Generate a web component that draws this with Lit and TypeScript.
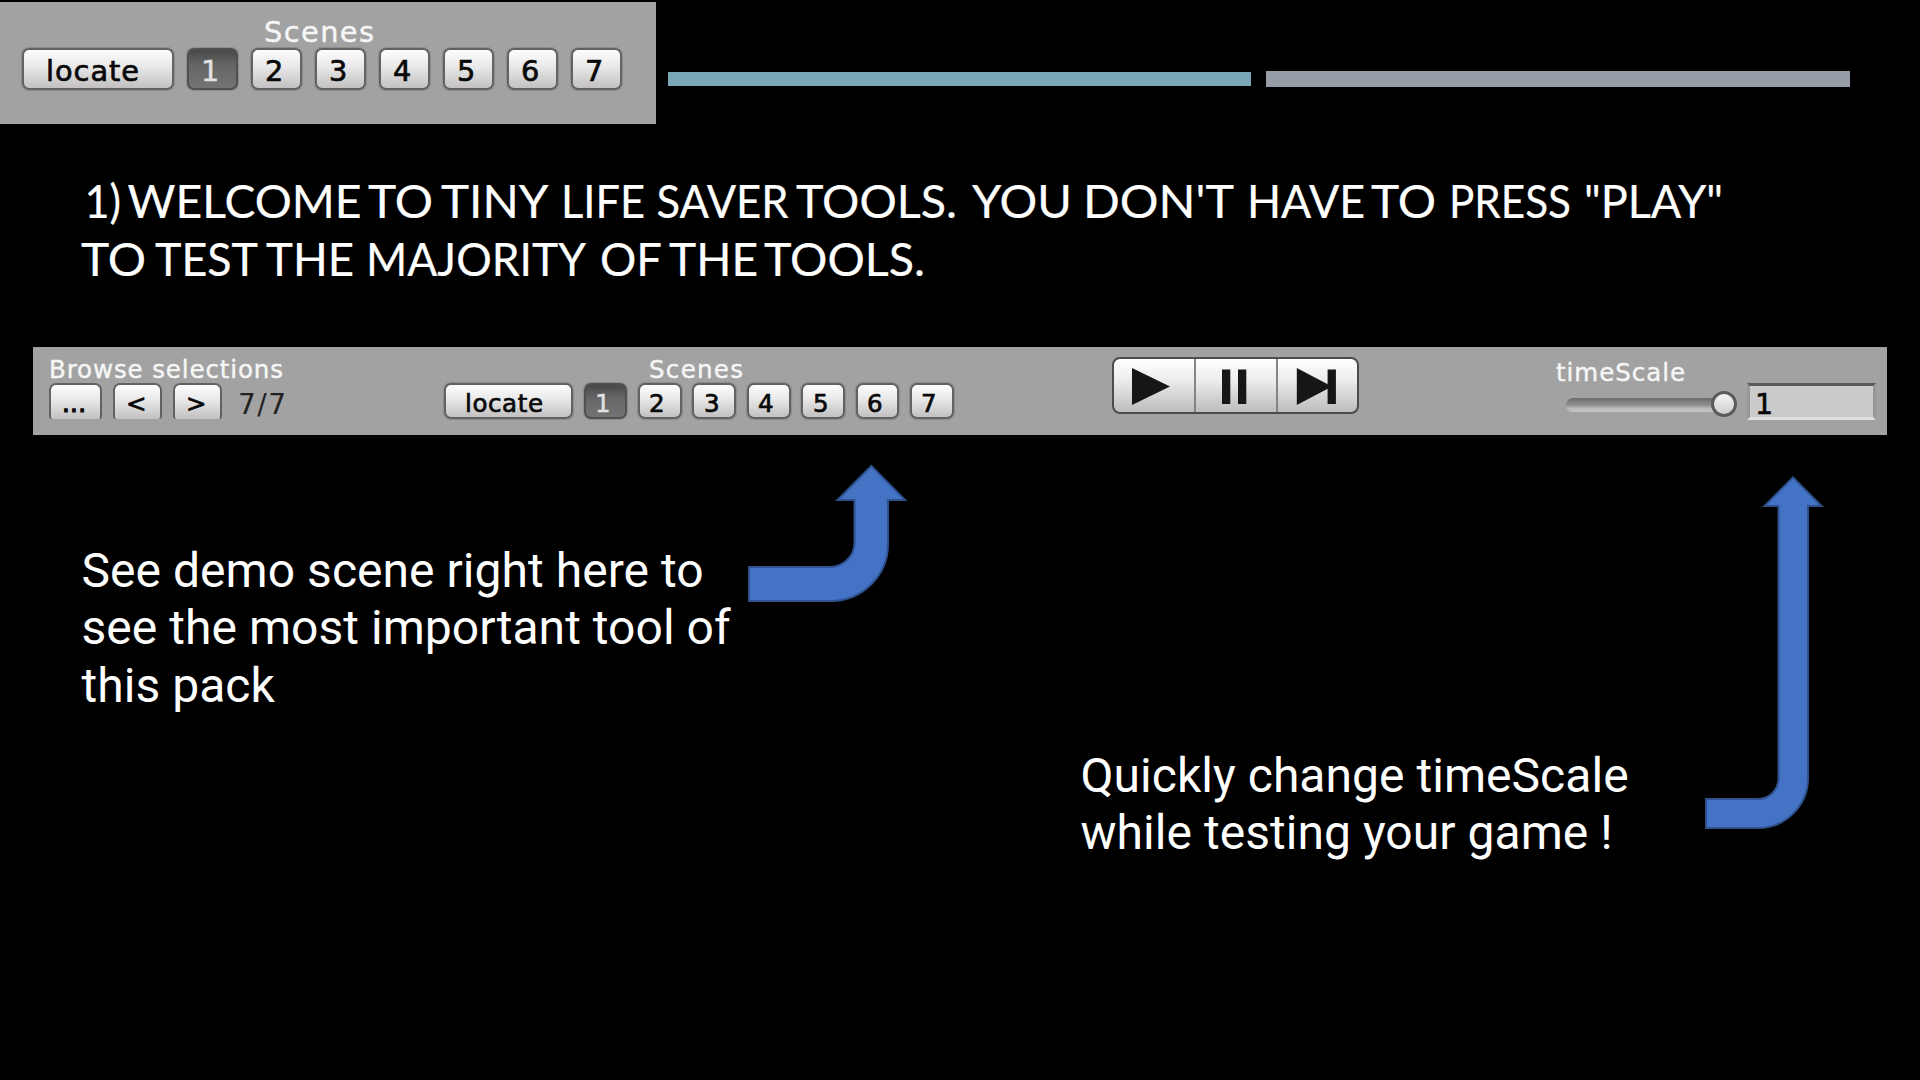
import { LitElement, html, svg, css } from "lit";
import { customElement } from "lit/decorators.js";

type Word = [text: string, x: number, width: number];

const LINE_ONE: Word[] = [
  ["1)", 84.5, 36.5], ["WELCOME", 127.5, 234], ["TO", 368, 65], ["TINY", 441, 107.5],
  ["LIFE", 561, 84], ["SAVER", 656.5, 132], ["TOOLS.", 796, 161], ["YOU", 972, 100],
  ["DON'T", 1083, 151], ["HAVE", 1247, 118], ["TO", 1371, 65], ["PRESS", 1449, 122],
  ['"PLAY"', 1584, 139],
];
const LINE_TWO: Word[] = [
  ["TO", 81, 65], ["TEST", 155, 103], ["THE", 266, 88], ["MAJORITY", 366, 220],
  ["OF", 600, 62], ["THE", 669, 89], ["TOOLS.", 764, 161],
];

/* One run of text, spaced out to a given width, with its baseline at a given height. */
const label = (text: string, width: number, height: number, baseline: number, cls = "") => html`
  <svg class="label ${cls}" width=${width} height=${height}>
    <text x="0" y=${baseline} textLength=${width}>${text}</text>
  </svg>`;

const titleLine = (words: Word[]) => html`
  <svg class="title-line" width="1920" height="58">
    ${words.map(([t, x, w]) => svg`<text x=${x} y="44" textLength=${w} lengthAdjust="spacingAndGlyphs">${t}</text>`)}
  </svg>`;

@customElement("app-root")
export class AppRoot extends LitElement {
  static styles = css`
    :host { display: block; }
    .slide {
      position: relative; width: 1920px; height: 1080px; overflow: hidden;
      background: #000; color: #fff; display: flex; flex-direction: column;
      font-family: "DejaVu Sans", sans-serif;
    }
    svg { display: block; overflow: visible; flex: none; }
    .top { display: flex; height: 124px; box-sizing: border-box; padding-top: 2px; }
    .panel {
      width: 656px; height: 122px; background: #a2a2a2; box-sizing: border-box;
      padding: 11px 0 0 22px;
    }
    .panel .caption { margin-left: 241.5px; }
    .bar { height: 14px; width: 583px; margin: 70px 0 0 12px; background: #7aa8b7; }
    .bar.grey { height: 16px; width: 584px; margin: 69px 0 0 15px; background: #969da7; }
    .title { margin: 50px 0 0; height: 173px; font-weight: 400; }
    .title-line { font: 400 46px Lato, sans-serif; fill: #fff; stroke: #fff; stroke-width: 0.2; }

    .row { display: flex; }
    .big .row { gap: 13px; }
    .big .label { font-size: 28.8px; }
    .small .label { font-size: 24.5px; }
    .label.caption { fill: #f6f6f6; stroke: #f6f6f6; stroke-width: 0.4; }
    .btn {
      box-sizing: border-box; border: 2px solid #626262; border-radius: 7px;
      background: linear-gradient(#fdfdfd, #e8e8e8 45%, #c2c0c1);
      fill: #080808; stroke: #080808; stroke-width: 0.7;
      flex: none; display: flex; box-shadow: 0 0 1px 1px #8c8c8c;
    }
    .big .btn { width: 51px; height: 42px; padding-left: 11.5px; }
    .big .btn.locate { width: 152px; padding-left: 22px; }
    .small .btn { width: 43.8px; height: 36px; padding-left: 9.5px; }
    .small .btn.locate { width: 129px; padding-left: 19px; }
    .btn.on {
      background: linear-gradient(#484848, #666 40%, #737373);
      border-color: #505050; fill: #e2e2e2; stroke: #e2e2e2; stroke-width: 0.4;
    }

    .toolbar {
      margin-left: 33px; width: 1854px; height: 88px; background: #a2a2a2;
      display: flex; align-items: flex-start; flex: none;
    }
    .browse { width: 395px; margin-left: 16px; padding-top: 9px; }
    .browse .row { gap: 11px; }
    .small .browse .btn { width: 49px; border-bottom: 0; border-radius: 7px 7px 3px 3px; padding-left: 11px; box-shadow: none; }
    .small .browse .btn.dots { width: 53px; padding-left: 10.5px; stroke-width: 1.2; }
    .small .browse .count { font-size: 28px; fill: #222; margin-left: 5px; }
    .browse .caption { margin-left: -0.5px; }
    .scenes { width: 667.7px; padding-top: 9px; }
    .scenes .row { gap: 10.6px; }
    .scenes .caption { margin-left: 205px; }
    .play {
      box-sizing: border-box; width: 247px; height: 57px; margin-top: 10px; overflow: hidden;
      border: 2px solid #4c4c4c; border-radius: 8px; display: flex;
      background: linear-gradient(#fff, #ececec 40%, #bebcbd);
    }
    .play .cell { flex: 1; border-right: 2px solid #858585; }
    .play .cell:last-child { border-right: 0; }
    .play svg { fill: #161616; }
    .time { display: flex; margin-left: 197px; }
    .time-left { width: 191.5px; padding-top: 9px; }
    .track {
      position: relative; width: 160px; height: 14px; margin: 6px 0 0 10px; border-radius: 7px;
      background: linear-gradient(#6c6c6c, #8f8f8f 50%, #bcbcbc 75%, #c4c4c4);
    }
    .knob {
      position: absolute; left: 145px; top: -7px; width: 26px; height: 26px; box-sizing: border-box;
      border: 3px solid #5c5c5c; border-radius: 50%;
      background: linear-gradient(#f6f6f6, #cfcfcf);
    }
    .field {
      box-sizing: border-box; width: 129px; height: 37px; margin-top: 36px; padding-left: 4.5px;
      background: #cbcbcb; border: solid; border-width: 3px;
      border-color: #5a5a5a #979797 #dedede; fill: #050505; stroke: #050505; stroke-width: 0.6;
    }
    .small .field .label { font-size: 28.5px; }

    .notes { display: flex; font: 400 48px/57.4px Roboto, sans-serif; letter-spacing: 0.04px; }
    .note { margin: 0; white-space: pre; }
    .first { margin: 107px 0 0 81.5px; width: 999px; }
    .second { margin-top: 312px; }
    .arrows { position: absolute; left: 0; top: 0; fill: #4472c4; stroke: #2f528f; stroke-width: 2; }
  `;

  private scenes(wide: boolean) {
    const h = wide ? 38 : 32;
    const base = wide ? 31 : 26.7;
    return html`<div class="row">
      <div class="btn locate">${label("locate", wide ? 93 : 78, h, base)}</div>
      ${[1, 2, 3, 4, 5, 6, 7].map(
        (n) => html`<div class="btn ${n === 1 ? "on" : ""}">${label(String(n), wide ? 18 : 15.6, h, base)}</div>`,
      )}
    </div>`;
  }

  render() {
    return html`
      <main class="slide">
        <div class="top">
          <section class="panel big">
            ${label("Scenes", 110, 35, 28.5, "caption")}
            ${this.scenes(true)}
          </section>
          <div class="bar"></div>
          <div class="bar grey"></div>
        </div>
        <h1 class="title">${titleLine(LINE_ONE)}${titleLine(LINE_TWO)}</h1>
        <section class="toolbar small">
          <div class="browse">
            ${label("Browse selections", 234, 27, 22, "caption")}
            <div class="row">
              <div class="btn dots">${label("...", 24, 32, 26.7)}</div>
              <div class="btn">${label("<", 18, 32, 26.7)}</div>
              <div class="btn">${label(">", 18, 32, 26.7)}</div>
              ${label("7/7", 48, 36, 30.8, "count")}
            </div>
          </div>
          <div class="scenes">
            ${label("Scenes", 94, 27, 22, "caption")}
            ${this.scenes(false)}
          </div>
          <div class="play">
            <div class="cell"><svg width="80" height="53"><path d="M18 9V46L56 27.5Z" /></svg></div>
            <div class="cell"><svg width="80" height="53"><path d="M26 10.5h8.3V45H26zM42 10.5h8.3V45H42z" /></svg></div>
            <div class="cell"><svg width="80" height="53"><path d="M18.8 9V46L54 27.5Z" /><path d="M49.6 10.5h8.3V45h-8.3z" /></svg></div>
          </div>
          <div class="time">
            <div class="time-left">
              ${label("timeScale", 129, 36, 24.7, "caption")}
              <div class="track"><div class="knob"></div></div>
            </div>
            <div class="field">${label("1", 18, 31, 28.3)}</div>
          </div>
        </section>
        <section class="notes">
          <p class="note first">See demo scene right here to<br />see the most important tool of<br />this pack</p>
          <p class="note second">Quickly change timeScale<br />while testing your game !</p>
        </section>
        <svg class="arrows" width="1920" height="1080">
          <path d="M749 567H830A24.5 24.5 0 0 0 854.5 542.5V500H837.5L871.3 466L905 500H888V544A57 57 0 0 1 831 601H749Z" />
          <path d="M1706 799H1758A20.5 20.5 0 0 0 1778.5 778.5V506H1764.5L1793 477.3L1821.5 506H1808V778A50 50 0 0 1 1758 828H1706Z" />
        </svg>
      </main>`;
  }
}
